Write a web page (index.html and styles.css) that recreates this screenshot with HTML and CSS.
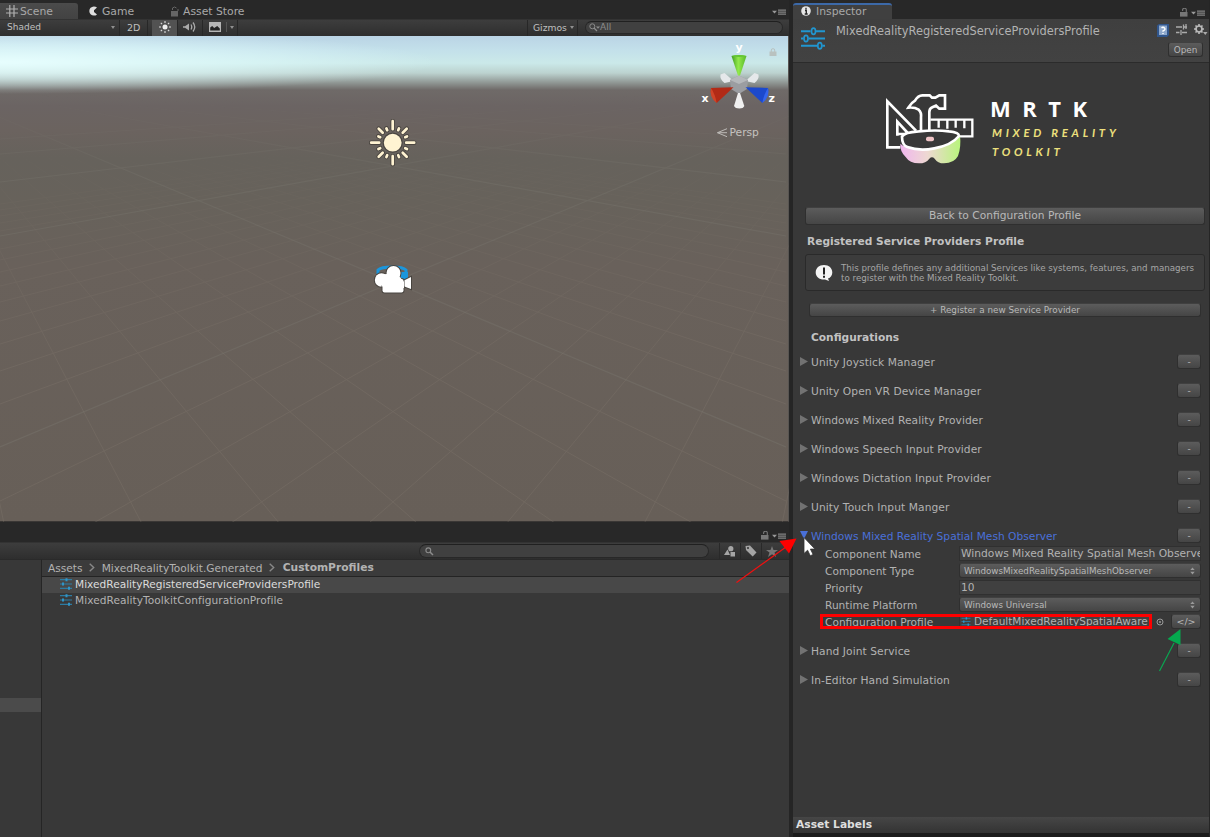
FILE: index.html
```html
<!DOCTYPE html>
<html lang="en">
<head>
<meta charset="utf-8">
<title>Unity Editor</title>
<link rel="stylesheet" href="styles.css">
</head>
<body>
<svg class="defs" width="0" height="0">
  <defs>
    <symbol id="sliders" viewBox="0 0 24 24">
      <path d="M0 5.2h9.5m5 0H24M0 12.5h2.5m5 0H24M0 19.7h16.3m5 0H24" fill="none" stroke="#2196d0" stroke-width="1.9"/>
      <g fill="none" stroke="#2196d0" stroke-width="1.7"><ellipse cx="12.500" cy="5.2" rx="2" ry="3.1"/><ellipse cx="5" cy="12.5" rx="2" ry="3.1"/><ellipse cx="18.8" cy="19.7" rx="2" ry="3.1"/></g>
    </symbol>
    <symbol id="asset" viewBox="0 0 12 12">
      <path d="M0 1.7h12M0 6h12M0 10.3h12" stroke="#2c7ca4" stroke-width="1.2"/>
      <path d="M6.500 .2v3M3 4.500v3M9 8.800v3" stroke="#2f95c8" stroke-width="2"/>
    </symbol>
    <symbol id="lock" viewBox="0 0 8 9">
      <path d="M2.6 3V1.8a1.6 1.3 0 0 1 3.7 0V4" fill="none" stroke="#777" stroke-width="1.1"/><path d="M0 4h7.5v4.6H0z" fill="#777"/>
    </symbol>
    <symbol id="menu" viewBox="0 0 14 7">
      <path d="M0 1.7h5L2.5 4.4z" fill="#9a9a9a"/><path d="M6 1.1h8M6 3.1h8M6 5.1h8" stroke="#828282" stroke-width="1.4"/>
    </symbol>
    <symbol id="updown" viewBox="0 0 5 8"><path d="M.3 3.1 2.5.4l2.2 2.7zM.3 4.7h4.4L2.5 7.4z" fill="#9a9a9a"/></symbol>
    <linearGradient id="visor"><stop offset="0" stop-color="#f0b6ee"/><stop offset=".45" stop-color="#eed8d2"/><stop offset="1" stop-color="#b8f47c"/></linearGradient>
    <linearGradient id="gy"><stop offset="0" stop-color="#3f9c22"/><stop offset=".45" stop-color="#92e94a"/><stop offset="1" stop-color="#58b82b"/></linearGradient>
    <linearGradient id="fadeMinor" x2="0" y2="1"><stop offset=".2" stop-color="#000"/><stop offset=".34" stop-color="#555"/><stop offset=".7" stop-color="#fff"/></linearGradient>
    <linearGradient id="fadeMajor" x2="0" y2="1"><stop offset=".12" stop-color="#000"/><stop offset=".3" stop-color="#bbb"/><stop offset="1" stop-color="#fff"/></linearGradient>
    <mask id="mMinor" maskUnits="userSpaceOnUse" x="0" y="36" width="789" height="486"><rect y="36" width="789" height="486" fill="url(#fadeMinor)"/></mask>
    <mask id="mMajor" maskUnits="userSpaceOnUse" x="0" y="36" width="789" height="486"><rect y="36" width="789" height="486" fill="url(#fadeMajor)"/></mask>
  </defs>
</svg>
<div class="editor">
  <div class="left">
    <section class="scene">
      <div class="tabs">
        <div class="tab tab-scene"><svg width="12" height="12" viewBox="0 0 12 12"><path d="M3.8 0v12M8 0v12M0 4h12M0 8h12" stroke="#b0b0b0" stroke-width="1.2"/></svg>Scene</div>
        <div class="tab tab-game"><svg width="9" height="10" viewBox="0 0 9 10"><path d="M8 1.6A4.6 4.6 0 1 0 8 8.4L5 6V4.2z" fill="#dedede"/></svg>Game</div>
        <div class="tab tab-store"><svg width="8" height="11" viewBox="0 0 8 11"><path d="M1.5 4V2q2-2 4 0" fill="none" stroke="#666"/><path d="M0 5h7v5.5H0z" fill="#666"/><path d="M7 3v2" stroke="#666"/></svg>Asset Store</div>
        <svg class="end-menu" width="14" height="7"><use href="#menu"/></svg>
      </div>
      <div class="bar">
        <div class="cell c-shaded">Shaded<i class="caret"></i></div>
        <div class="cell c-2d">2D</div>
        <div class="cell c-sun"><svg width="12" height="12" viewBox="0 0 12 12"><circle cx="6" cy="6" r="2.5" fill="#eee"/><path d="M6 0v2M6 10v2M0 6h2M10 6h2M1.8 1.8l1.3 1.3M8.9 8.9l1.3 1.3M10.2 1.8 8.900 3.1M3.1 8.900 1.800 10.200" stroke="#ddd" stroke-width="1.1"/></svg></div>
        <div class="cell c-audio"><svg width="14" height="12" viewBox="0 0 14 12"><path d="M0 5.2h2L6 2.500v7L2 6.800H0z" fill="#aaa"/><path d="M8 3.500q1.500 2.500 0 5M10 1.500q3.500 4.500 0 9" fill="none" stroke="#aaa" stroke-width="1.300"/></svg></div>
        <div class="cell c-fx"><svg width="12" height="10" viewBox="0 0 12 10"><path d="M0 0h12v10H0z" fill="#b5b5b5"/><path d="M1.200 8.500V5.500l2-1.500 2 2 3-2 2.600 2.500v2z" fill="#222"/></svg><i class="sep"></i><i class="caret"></i></div>
        <div class="fill"></div>
        <div class="cell c-gizmos">Gizmos<i class="caret"></i></div>
        <div class="search s-top"><svg width="11" height="9" viewBox="0 0 11 9"><circle cx="3.300" cy="3.300" r="2.500" fill="none" stroke="#8c8c8c"/><path d="m5 5 3 3" stroke="#8c8c8c" stroke-width="1.300"/><path d="M7 3.500h4L9 5.700z" fill="#8c8c8c"/></svg>All</div>
      </div>
      <div class="view">
        <svg width="789" height="486" viewBox="0 36 789 486">
          <g mask="url(#mMinor)" stroke="#847a70" stroke-width="1" fill="none" opacity=".3">
            <path id="minor" d="M875 80 0 4253M875 80 0 1761M875 80 0 1133M875 80 0 846M875 80 0 682M875 80 0 576M875 80 0 501M875 80 0 404M875 80 0 371M875 80 0 344M875 80 0 321M875 80 0 302M875 80 0 286M875 80 0 272M875 80 0 260M875 80 0 249M875 80 0 231M875 80 0 223M875 80 0 216M875 80 0 210M875 80 0 204"/>
            <use href="#minor" transform="matrix(-1 0 0 1 786 0)"/>
          </g>
          <g mask="url(#mMajor)" stroke="#7e7c74" stroke-width="1.200" fill="none" opacity=".36">
            <path id="major" d="M875 80 0 447M875 80 0 236M875 80 0 182M875 80 0 154M875 80 0 139"/>
            <use href="#major" transform="matrix(-1 0 0 1 786 0)"/>
          </g>
          <g transform="translate(392.700 142.700)">
            <g stroke-linecap="round">
              <g stroke="#4a4540" stroke-width="4.600"><path id="ray1" d="M0-13.500V-21.500M0 13.500V21.500M-13.500 0H-21.500M13.500 0H21.500M-10-10-14-14M10-10l4-4M-10 10l-4 4M10 10l4 4M-5.500-12.500-6.300-14.300M5.500-12.500 6.300-14.300M-5.500 12.500-6.300 14.300M5.500 12.500 6.300 14.300M-12.500-5.500-14.300-6.300M12.500-5.500 14.300-6.300M-12.500 5.500-14.300 6.300M12.500 5.500 14.300 6.300"/></g>
              <circle r="10.100" fill="#4a4540"/>
              <use href="#ray1" stroke="#fff3d2" stroke-width="2.700"/>
              <circle r="8.900" fill="#fff3d2"/>
            </g>
          </g>
          <g>
            <path d="M378 274v-4q3-3 14-3t14 3v11" fill="none" stroke="#1b96dc" stroke-width="3"/><path d="M400 272h8v9l-7-1z" fill="#1b96dc"/>
            <g fill="#fff" stroke="#494540" stroke-width="2" paint-order="stroke"><path d="M403 281l8-4v12l-8-3z"/><circle cx="381.500" cy="280" r="6.700"/><circle cx="393.500" cy="273" r="7"/><rect x="382.500" y="279" width="21" height="13.500" rx="2"/></g>
            <path d="M381 274.500l6-.5 12 2 5 6v6h-20l-5-5z" fill="#fff"/>
          </g>
          <g>
            <path d="m720.500 74.500 4-1.500 9 8-9 2q-5-4-4-8.500z" fill="#e5e8ea"/><path d="m758.500 74.500-4-1.500-9 8 9 2q5-4 4-8.500z" fill="#e5e8ea"/>
            <path d="m739 75.500 9 4.500-1 9-8 5-8-5-1-9z" fill="#9b9da1"/><path d="m739 75.500 9 4.500-9 4-9-4z" fill="#b5b8bb"/>
            <path d="M731.500 56q7.500-2 15 0L740 75.500h-2z" fill="url(#gy)"/><path d="M731.500 56q7.500-2 15 0-7.500 2-15 0z" fill="#63c533"/>
            <path d="M738 93h2l4.300 13q-1 2.500-5 2.500t-5.300-2.500z" fill="#f0f0f0"/>
            <path d="M733.500 87.200 711 88q-1.500 7 5.700 15z" fill="#b22a16"/><path d="M711 88q4 6 5.700 15-8-6-5.700-15z" fill="#d04428"/>
            <path d="m745.500 87.200 22.500.8q1.500 7-5.700 15z" fill="#1c49cc"/><path d="M768 88q-4 6-5.700 15 8-6 5.700-15z" fill="#3465ee"/>
            <g class="axis"><text x="735.500" y="50.500">y</text><text x="701.500" y="102">x</text><text x="768.500" y="102">z</text></g>
            <path d="M771.300 52v-2a1.700 1.300 0 0 1 3.400 0v2" fill="none" stroke="#b9c2c0"/><path d="M769.500 51.500h7v4.500h-7z" fill="#b9c2c0"/>
            <path d="m727 128.700-9.500 4 9.500 4M717.500 132.700h9.500" fill="none" stroke="#bdbab7" stroke-width="1"/>
            <text class="persp" x="729.500" y="136">Persp</text>
          </g>
        </svg>
      </div>
    </section>
    <section class="project">
      <div class="tabs tabs-project"><svg width="8" height="9"><use href="#lock"/></svg><svg width="14" height="7"><use href="#menu"/></svg></div>
      <div class="bar bar-project">
        <div class="search s-project"><svg width="9" height="9" viewBox="0 0 9 9"><circle cx="3.300" cy="3.300" r="2.400" fill="none" stroke="#8c8c8c" stroke-width="1.100"/><path d="m5 5 3 3" stroke="#8c8c8c" stroke-width="1.500"/></svg></div>
        <div class="pbtn"><svg width="12" height="11" viewBox="0 0 12 11"><circle cx="6.800" cy="2.700" r="2.600" fill="#a5a5a5"/><path d="M0 9 3.500 3.500 6 9zM6.500 6H11v4.500H6.500z" fill="#a5a5a5"/></svg></div>
        <div class="pbtn"><svg width="12" height="12" viewBox="0 0 12 12"><path d="M.5 1 5 .5l6.500 7-3.800 4L1 5z" fill="#a5a5a5"/><circle cx="3" cy="3" r="1" fill="#333"/></svg></div>
        <div class="pbtn"><svg width="12" height="11" viewBox="0 0 12 11"><path d="m6 0 1.500 4H12L8.500 6.500 10 11 6 8.300 2 11l1.500-4.500L0 4h4.500z" fill="#777"/></svg></div>
      </div>
      <div class="browser">
        <div class="tree"><div class="tree-sel"></div></div>
        <div class="files">
          <div class="crumbs"><span>Assets</span><svg width="6" height="9" viewBox="0 0 6 9"><path d="m.7.700 4 3.800-4 3.800" fill="none" stroke="#888" stroke-width="1.400"/></svg><span>MixedRealityToolkit.Generated</span><svg width="6" height="9" viewBox="0 0 6 9"><path d="m.7.700 4 3.800-4 3.800" fill="none" stroke="#888" stroke-width="1.400"/></svg><b>CustomProfiles</b></div>
          <div class="file selected"><svg width="12" height="12"><use href="#asset"/></svg>MixedRealityRegisteredServiceProvidersProfile</div>
          <div class="file second"><svg width="12" height="12"><use href="#asset"/></svg>MixedRealityToolkitConfigurationProfile</div>
        </div>
      </div>
    </section>
  </div>
  <section class="inspector">
    <div class="tabs tabs-insp">
      <div class="tab tab-insp"><svg width="10" height="10" viewBox="0 0 10 10"><circle cx="5" cy="5" r="4.800" fill="#e6e6e6"/><path d="M5 1.800v1.600M4 4.500h1.300V8M3.700 8h3" stroke="#222" stroke-width="1.300" fill="none"/></svg>Inspector</div>
      <div class="fill"></div>
      <svg width="8" height="9"><use href="#lock"/></svg><svg width="14" height="7"><use href="#menu"/></svg>
    </div>
    <header class="head">
      <svg class="head-icon" width="24" height="24"><use href="#sliders"/></svg>
      <h1>MixedRealityRegisteredServiceProvidersProfile</h1>
      <div class="head-actions">
        <div class="head-icons">
          <svg width="12" height="13" viewBox="0 0 12 13"><path d="M0 1.500 2 0h10v11l-2 2H0z" fill="#31568c"/><path d="M2 1.500h8v9.500H2z" fill="#8fa9cc"/><path d="M4.500 4q1.500-1.500 3 0T6 7v.800M6 9v1" fill="none" stroke="#fff" stroke-width="1.400"/></svg>
          <svg width="11" height="11" viewBox="0 0 11 11"><path d="M0 3h6M8 3h3M0 8.500h3.500M6 8.500h5M7.500.5v5M5 6v5M10 0v5" stroke="#aaa" stroke-width="1.300"/></svg>
          <svg width="14" height="12" viewBox="0 0 14 12"><circle cx="5" cy="5" r="3" fill="none" stroke="#bbb" stroke-width="1.700"/><path d="M5 0v2M5 8v2M0 5h2M8 5h2M1.500 1.500l1.300 1.300M7.200 7.200l1.300 1.300M8.500 1.500 7.200 2.800M2.800 7.200 1.500 8.500" stroke="#bbb" stroke-width="1.600"/><path d="M9 8h4.500l-2.200 3z" fill="#aaa"/></svg>
        </div>
        <button class="btn open">Open</button>
      </div>
    </header>
    <div class="logo">
      <svg width="94" height="74" viewBox="40 35 282 222">
        <g fill="none" stroke="#fff" stroke-width="8">
          <path d="M92 201H53V63l86 88M83 166v-42l34 37H83z"/>
          <path d="M154 152v-40q2-16-7-24-12-8-31-6 9-15 20-21 9-16 22-16h22l7 7h10l12-7h17v40h-17l-10-9-11 5q-9 4-9 14v57" stroke-width="8"/>
          <path d="M182 118h126v50h-38M207 118v24M233 118v27M258 118v24M284 118v26" stroke-width="7"/>
        </g>
        <path d="M92 190q14 15 55 12l67-7 57-30q4 36-6 62-12 22-42 22-19 0-28-14-8-8-16 0-10 14-31 14-28 0-40-19-18-18-16-40z" fill="url(#visor)"/>
        <path d="M97 169q6-13 50-16 52-5 91 0 30 2 30 14-23 28-74 37-45 9-81-4-16-6-16-31z" fill="#383838" stroke="#fff" stroke-width="8"/>
        <rect x="169" y="169" width="24" height="14" rx="6" fill="#efc4c6"/>
      </svg>
      <div class="brand"><div class="mrtk">MRTK</div><div class="sub">MIXED REALITY</div><div class="sub">TOOLKIT</div></div>
    </div>
    <button class="btn back">Back to Configuration Profile</button>
    <h2>Registered Service Providers Profile</h2>
    <div class="help"><svg width="18" height="18" viewBox="0 0 18 18"><path d="M9 1c5 0 8.300 3.200 8.300 7.400 0 3-1.700 5-4.300 6.200l1 2.400-4-1.500C4.500 16 .7 12.800.7 8.400.7 4.200 4 1 9 1z" fill="#f4f4f4"/><path d="M9 3.500v7M9 11.800v2" stroke="#222" stroke-width="2"/></svg><p>This profile defines any additional Services like systems, features, and managers<br>to register with the Mixed Reality Toolkit.</p></div>
    <button class="btn register">+ Register a new Service Provider</button>
    <h3>Configurations</h3>
    <div class="list">
      <div class="row"><i class="tri"></i><span>Unity Joystick Manager</span><button class="btn minus">-</button></div>
      <div class="row"><i class="tri"></i><span>Unity Open VR Device Manager</span><button class="btn minus">-</button></div>
      <div class="row"><i class="tri"></i><span>Windows Mixed Reality Provider</span><button class="btn minus">-</button></div>
      <div class="row"><i class="tri"></i><span>Windows Speech Input Provider</span><button class="btn minus">-</button></div>
      <div class="row"><i class="tri"></i><span>Windows Dictation Input Provider</span><button class="btn minus">-</button></div>
      <div class="row"><i class="tri"></i><span>Unity Touch Input Manger</span><button class="btn minus">-</button></div>
      <div class="row expanded"><i class="tri"></i><span>Windows Mixed Reality Spatial Mesh Observer</span><button class="btn minus">-</button></div>
      <div class="fields">
        <div class="field"><label>Component Name</label><div class="input wide">Windows Mixed Reality Spatial Mesh Observe</div></div>
        <div class="field"><label>Component Type</label><div class="btn select">WindowsMixedRealitySpatialMeshObserver<svg width="5" height="8"><use href="#updown"/></svg></div></div>
        <div class="field"><label>Priority</label><div class="input">10</div></div>
        <div class="field"><label>Runtime Platform</label><div class="btn select">Windows Universal<svg width="5" height="8"><use href="#updown"/></svg></div></div>
        <div class="field"><label>Configuration Profile</label><div class="input object"><svg width="10" height="9"><use href="#asset"/></svg><span>DefaultMixedRealitySpatialAware</span></div><svg class="picker" width="8" height="8" viewBox="0 0 8 8"><circle cx="4" cy="4" r="3" fill="none" stroke="#999"/><circle cx="4" cy="4" r="1" fill="#999"/></svg><button class="btn code">&lt;/&gt;</button><div class="mark"></div></div>
      </div>
      <div class="row"><i class="tri"></i><span>Hand Joint Service</span><button class="btn minus">-</button></div>
      <div class="row"><i class="tri"></i><span>In-Editor Hand Simulation</span><button class="btn minus">-</button></div>
    </div>
    <div class="fill"></div>
    <footer class="labels">Asset Labels</footer>
  </section>
  <svg class="overlay" width="1210" height="837" viewBox="0 0 1210 837">
    <path d="M736.500 582.500 786 547" stroke="#f01010" stroke-width="1.200"/><path d="M796.500 538.500 779.500 541 789 553.500z" fill="#fe0000"/>
    <path d="M1159.500 671 1174 643" stroke="#0aa651" stroke-width="1.200"/><path d="M1180.500 629 1167.500 639 1180.500 645z" fill="#05a94e"/>
    <path d="M804 537.500v16l3.600-3.300 2.700 5.600 2.800-1.400-2.700-5.300h4.600z" fill="#fff" stroke="#333" stroke-width=".8"/>
  </svg>
</div>
</body>
</html>
```

FILE: styles.css
```css
* { box-sizing: border-box; }
body { margin: 0; background: #282828; font-family: "DejaVu Sans", Verdana, sans-serif; font-size: 10.5px; color: #b2b2b2; }
svg { display: block; flex: none; }
h1, h2, h3, p { margin: 0; }
.defs { position: absolute; }
.editor { position: relative; display: grid; grid-template-columns: 789px 416px; column-gap: 4px; width: 1210px; height: 837px; overflow: hidden; background: #252525; white-space: nowrap; }
.left { display: flex; flex-direction: column; }
.fill { flex: 1; }
.scene { display: flex; flex-direction: column; height: 522px; }

.tabs { display: flex; height: 19px; background: #282828; }
.tab { display: flex; align-items: center; height: 16px; margin-top: 3px; font-size: 10.8px; color: #a8a8a8; }
.tab-scene { width: 78px; padding-left: 6px; gap: 2px; background: linear-gradient(#4b4b4b, #424242); border-radius: 0 3px 0 0; }
.tab-game { margin-left: 11px; gap: 4px; width: 82px; }
.tab-store { gap: 4px; }
.end-menu { margin: 9px 3px 0 auto; }

.bar { display: flex; height: 17px; background: linear-gradient(#3d3d3d, #2e2e2e); border-top: 1px solid #333; font-size: 9px; }
.bar .cell { padding-bottom: 2px; }
.cell { display: flex; align-items: center; border-right: 1px solid #272727; color: #c0c0c0; }
.caret { border: 2px solid transparent; border-top: 3px solid #8f8f8f; border-bottom: 0; }
.c-shaded { width: 120px; padding: 0 4px 0 7px; justify-content: space-between; }
.c-2d { width: 28px; padding-left: 7px; font-size: 9.5px; }
.c-sun { width: 26px; margin-left: 4px; justify-content: center; background: #525252; }
.c-audio { width: 25px; justify-content: center; }
.c-fx { width: 35px; padding-left: 6px; gap: 3px; }
.sep { width: 1px; height: 10px; background: #555; margin-left: 2px; }
.c-gizmos { width: 51px; border-left: 1px solid #272727; padding: 0 3px 0 5px; justify-content: space-between; margin-right: 7px; font-size: 9.2px; }
.search { display: flex; align-items: center; height: 13px; background: #404040; border: 1px solid #282828; border-top-color: #202020; border-radius: 7px; color: #8c8c8c; }
.s-top { width: 198px; margin: 1px 6px 0 0; padding: 0 0 1px 3px; gap: 0; }

.view { height: 486px; background:
  radial-gradient(ellipse 440px 32px at 0 26px, rgba(232, 255, 255, .95), rgba(228, 255, 255, .5) 55%, rgba(225, 255, 255, 0)),
  linear-gradient(#bad4e5 0, #c3e0ea 14px, #cbe9e9 27px, #bcd2cf 37px, #939b98 46px, #6f6a68 54px, #6b6463 70px, #6b635f 95px, #66625c 122px, #67625b 165px, #69615b 230px, #675f58 486px); border-bottom: 1px solid #3a3735; border-right: 1px solid #585552; }
.axis text { font: bold 11px "DejaVu Sans", sans-serif; fill: #fff; }
.persp { font: 10.7px "DejaVu Sans", sans-serif; fill: #c5c2bf; }

.project { display: flex; flex-direction: column; flex: 1; }
.tabs-project { height: 20px; justify-content: flex-end; align-items: flex-end; gap: 3px; padding: 0 3px 2px 0; }
.bar-project { height: 17px; align-items: center; justify-content: flex-end; padding-right: 7px; }
.s-project { width: 290px; margin-right: 10px; padding-left: 5px; height: 14px; }
.pbtn { width: 21px; height: 16px; display: flex; align-items: center; justify-content: center; border-left: 1px solid #292929; }
.browser { display: flex; flex: 1; background: #383838; }
.tree { width: 42px; padding-top: 138px; border-right: 1px solid #252525; border-top: 1px solid #2a2a2a; }
.tree-sel { height: 14px; background: #4b4b4b; }
.files { flex: 1; }
.crumbs { display: flex; align-items: center; height: 18px; padding: 0 0 1px 6px; gap: 6.6px; background: #3b3b3b; border-bottom: 1px solid #242424; border-top: 1px solid #2a2a2a; font-size: 10.6px; }
.crumbs b { font-size: 10.7px; margin-left: 1px; }
.file { display: flex; align-items: center; height: 16px; padding: 0 0 2px 18px; gap: 3px; font-size: 10.6px; }
.second { letter-spacing: .05px; }
.selected { background: #484848; color: #dcdcdc; }

.inspector { display: flex; flex-direction: column; background: #383838; }
.tabs-insp { align-items: flex-end; gap: 3px; padding-right: 4px; }
.tabs-insp > svg { margin-bottom: 2px; }
.tab-insp { width: 99px; padding: 0 0 2px 8px; gap: 5px; background: #404040; border-top: 2px solid #3c69a8; border-radius: 3px 3px 0 0; }
.head { display: flex; height: 44px; background: linear-gradient(#3f3f3f, #424242); border-bottom: 1px solid #2b2b2b; padding-left: 8px; }
.head-icon { margin-top: 7px; }
.head h1 { margin-left: 11px; font-size: 11.4px; font-weight: normal; line-height: 25px; width: 310px; }
.head-actions { flex: none; margin-left: 11px; width: 56px; }
.head-icons { display: flex; gap: 7px; padding-top: 5px; margin: 0 -8px 0 4px; height: 23px; }
.btn { display: flex; align-items: center; justify-content: center; margin: 0; padding: 0; border: 1px solid #2f2f2f; border-top-color: #404040; border-radius: 3px; background: linear-gradient(#5c5c5c, #454545); color: #b9b9b9; font: 9px "DejaVu Sans", Verdana, sans-serif; }
.open { width: 35px; height: 15px; margin: 0 0 0 15px; font-size: 8.9px; }
.logo { display: flex; height: 144px; padding: 29px 0 0 90px; }
.brand { margin: 1px 0 0 13px; }
.mrtk { font: bold 22px/30px "Open Sans", sans-serif; letter-spacing: 11.5px; color: #fff; }
.sub { font: italic bold 11.3px/19px Lato, sans-serif; letter-spacing: 3.75px; color: #ede07d; margin-left: 2px; }
.back { height: 18px; width: 400px; margin: 0 0 0 12px; padding-bottom: 1px; font-size: 10.67px; }
h2, h3 { font-size: 10.65px; font-weight: bold; color: #c2c2c2; }
h2 { height: 29px; line-height: 34px; margin-left: 14px; }
.help { display: flex; align-items: center; height: 37px; width: 400px; margin-left: 12px; padding: 1px 0 0 9px; gap: 8px; background: #3c3c3c; border: 1px solid #2a2a2a; border-radius: 3px; font-size: 8.71px; line-height: 10px; color: #a6a6a6; }
.register { height: 14px; width: 392px; margin: 12px 0 0 16px; font-size: 8.8px; }
h3 { height: 36px; line-height: 41px; margin-left: 18px; }
.row { display: flex; align-items: center; height: 17px; margin-bottom: 12px; padding: 0 8px 0 7px; font-size: 10.67px; letter-spacing: .08px; }
.row span { padding-top: 2px; }
.tri { width: 8px; height: 9px; margin-right: 3px; background: #727272; clip-path: polygon(0 0, 100% 50%, 0 100%); }
.row > .minus { width: 24px; height: 15px; margin-left: auto; }
.expanded { margin-bottom: 1px; color: #4a70d8; letter-spacing: 0; }
.expanded .tri { background: #4a70d8; clip-path: polygon(0 0, 100% 0, 50% 90%); }
.fields { margin-bottom: 12px; }
.field { position: relative; display: flex; align-items: center; height: 17px; padding-left: 32px; font-size: 10.6px; }
.field label { width: 134px; }
.input { width: 242px; height: 15px; line-height: 13px; padding-left: 1px; background: #404040; border: 1px solid #303030; overflow: hidden; }
.wide { font-size: 10.7px; }
.select { width: 242px; height: 15px; padding: 0 5px 0 4px; justify-content: space-between; font-size: 8.75px; }
.object { display: flex; align-items: center; width: 191px; gap: 3px; font-size: 10.5px; line-height: 15px; }
.picker { margin-left: 6px; }
.code { width: 30px; height: 15px; margin-left: 7px; font-size: 9.5px; }
.mark { position: absolute; left: 27px; top: 1px; width: 332px; height: 15px; border: 3px solid #fe0000; }
.labels { height: 20px; line-height: 15px; padding-left: 3px; font-weight: bold; font-size: 10.7px; color: #dedede; background: linear-gradient(#464646, #333); border-bottom: 4px solid #1b1b1b; }
.overlay { position: absolute; left: 0; top: 0; pointer-events: none; }
```
